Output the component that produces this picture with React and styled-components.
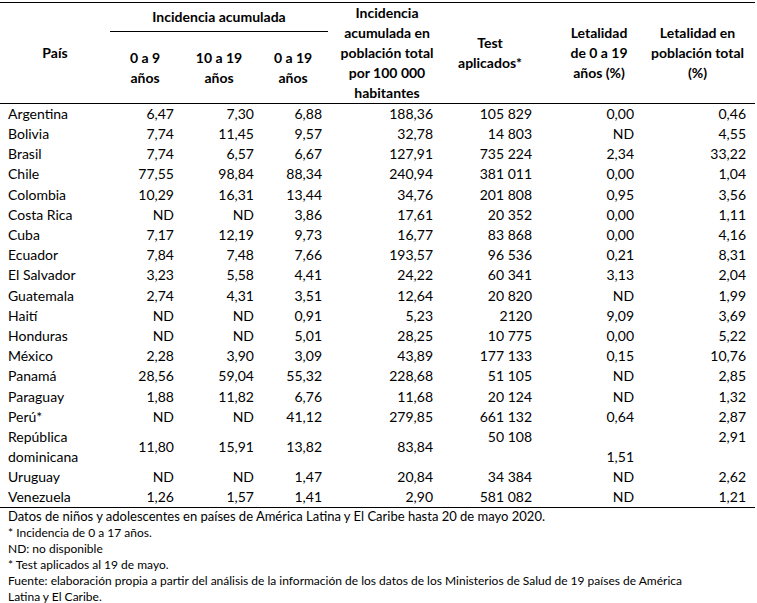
import React from 'react';
import styled, { createGlobalStyle } from 'styled-components';

const GlobalStyle = createGlobalStyle`
  body {
    margin: 0;
    background: #ffffff;
  }
`;

const columns = [
  { width: 110, pr: 0 },
  { width: 70, pr: 6 },
  { width: 78, pr: 4 },
  { width: 70, pr: 6 },
  { width: 118, pr: 13 },
  { width: 88, pr: 2 },
  { width: 106, pr: 6 },
  { width: 115, pr: 9 },
];

const rows = [
  ['Argentina', '6,47', '7,30', '6,88', '188,36', '105 829', '0,00', '0,46'],
  ['Bolivia', '7,74', '11,45', '9,57', '32,78', '14 803', 'ND', '4,55'],
  ['Brasil', '7,74', '6,57', '6,67', '127,91', '735 224', '2,34', '33,22'],
  ['Chile', '77,55', '98,84', '88,34', '240,94', '381 011', '0,00', '1,04'],
  ['Colombia', '10,29', '16,31', '13,44', '34,76', '201 808', '0,95', '3,56'],
  ['Costa Rica', 'ND', 'ND', '3,86', '17,61', '20 352', '0,00', '1,11'],
  ['Cuba', '7,17', '12,19', '9,73', '16,77', '83 868', '0,00', '4,16'],
  ['Ecuador', '7,84', '7,48', '7,66', '193,57', '96 536', '0,21', '8,31'],
  ['El Salvador', '3,23', '5,58', '4,41', '24,22', '60 341', '3,13', '2,04'],
  ['Guatemala', '2,74', '4,31', '3,51', '12,64', '20 820', 'ND', '1,99'],
  ['Haití', 'ND', 'ND', '0,91', '5,23', '2120', '9,09', '3,69'],
  ['Honduras', 'ND', 'ND', '5,01', '28,25', '10 775', '0,00', '5,22'],
  ['México', '2,28', '3,90', '3,09', '43,89', '177 133', '0,15', '10,76'],
  ['Panamá', '28,56', '59,04', '55,32', '228,68', '51 105', 'ND', '2,85'],
  ['Paraguay', '1,88', '11,82', '6,76', '11,68', '20 124', 'ND', '1,32'],
  ['Perú*', 'ND', 'ND', '41,12', '279,85', '661 132', '0,64', '2,87'],
  ['República dominicana', '11,80', '15,91', '13,82', '83,84', '50 108', '1,51', '2,91'],
  ['Uruguay', 'ND', 'ND', '1,47', '20,84', '34 384', 'ND', '2,62'],
  ['Venezuela', '1,26', '1,57', '1,41', '2,90', '581 082', 'ND', '1,21'],
];

// República dominicana row: Word left some cells top / bottom aligned
const tallAlign = ['middle', 'middle', 'middle', 'middle', 'middle', 'top', 'bottom', 'top'];

const App = () => {
  return (
    <>
      <GlobalStyle />
      <Page>
        <Table>
          <colgroup>
            {columns.map((c, i) => (
              <col key={i} style={{ width: c.width }} />
            ))}
          </colgroup>
          <thead>
            <tr>
              <Th rowSpan={2}>País</Th>
              <GroupTh colSpan={3}>Incidencia acumulada</GroupTh>
              <Th rowSpan={2}>
                Incidencia
                <br />
                acumulada en
                <br />
                población total
                <br />
                por 100 000
                <br />
                habitantes
              </Th>
              <Th rowSpan={2}>
                Test
                <br />
                aplicados*
              </Th>
              <Th rowSpan={2} $pl={24}>
                Letalidad
                <br />
                de 0 a 19
                <br />
                años (%)
              </Th>
              <Th rowSpan={2}>
                Letalidad en
                <br />
                población total
                <br />
                (%)
              </Th>
            </tr>
            <SubRow>
              <Th>
                0 a 9
                <br />
                años
              </Th>
              <Th>
                10 a 19
                <br />
                años
              </Th>
              <Th>
                0 a 19
                <br />
                años
              </Th>
            </SubRow>
          </thead>
          <tbody>
            {rows.map((r) => {
              const tall = r[0] === 'República dominicana';
              return (
                <Row key={r[0]} $tall={tall}>
                  <Country>{tall ? <>República<br />dominicana</> : r[0]}</Country>
                  {r.slice(1).map((v, i) => (
                    <Num
                      key={i}
                      $pr={columns[i + 1].pr}
                      $valign={tall ? tallAlign[i + 1] : 'middle'}
                    >
                      {v}
                    </Num>
                  ))}
                </Row>
              );
            })}
          </tbody>
        </Table>
        <Notes>
          <Lead>Datos de niños y adolescentes en países de América Latina y El Caribe hasta 20 de mayo 2020.</Lead>
          <Note>* Incidencia de 0 a 17 años.</Note>
          <Note>ND: no disponible</Note>
          <Note>* Test aplicados al 19 de mayo.</Note>
          <Note>
            Fuente: elaboración propia a partir del análisis de la información de los datos de los Ministerios de Salud de 19 países de América
            <br />
            Latina y El Caribe.
          </Note>
        </Notes>
      </Page>
    </>
  );
};

const Page = styled.div`
  width: 757px;
  height: 603px;
  overflow: hidden;
  padding-top: 2px;
  box-sizing: border-box;
  font-family: Lato, 'Open Sans', sans-serif;
  color: #000000;
`;

const Table = styled.table`
  width: 755px;
  table-layout: fixed;
  border-collapse: collapse;
  border-top: 1px solid #000000;
  border-bottom: 1px solid #000000;
  font-size: 14px;
`;

const Th = styled.th`
  padding: 0 0 0 ${(p) => p.$pl || 0}px;
  font-weight: 700;
  line-height: 20px;
  text-align: center;
  vertical-align: middle;
  border-bottom: 1px solid #000000;
`;

const GroupTh = styled(Th)`
  height: 28px;
`;

const SubRow = styled.tr`
  height: 72px;
`;

const Row = styled.tr`
  height: ${(p) => (p.$tall ? 40.4 : 20.2)}px;
`;

const Country = styled.td`
  padding: 0 0 0 8px;
  line-height: 20px;
  text-align: left;
  vertical-align: middle;
  white-space: nowrap;
`;

const Num = styled.td`
  padding: 0 ${(p) => p.$pr}px 0 0;
  line-height: 20px;
  text-align: right;
  vertical-align: ${(p) => p.$valign};
  white-space: nowrap;
`;

const Notes = styled.div`
  padding: 0 0 0 8px;
  font-size: 12px;
  line-height: 16px;
`;

const Lead = styled.div`
  font-size: 13px;
  line-height: 17px;
`;

const Note = styled.div``;

export default App;
